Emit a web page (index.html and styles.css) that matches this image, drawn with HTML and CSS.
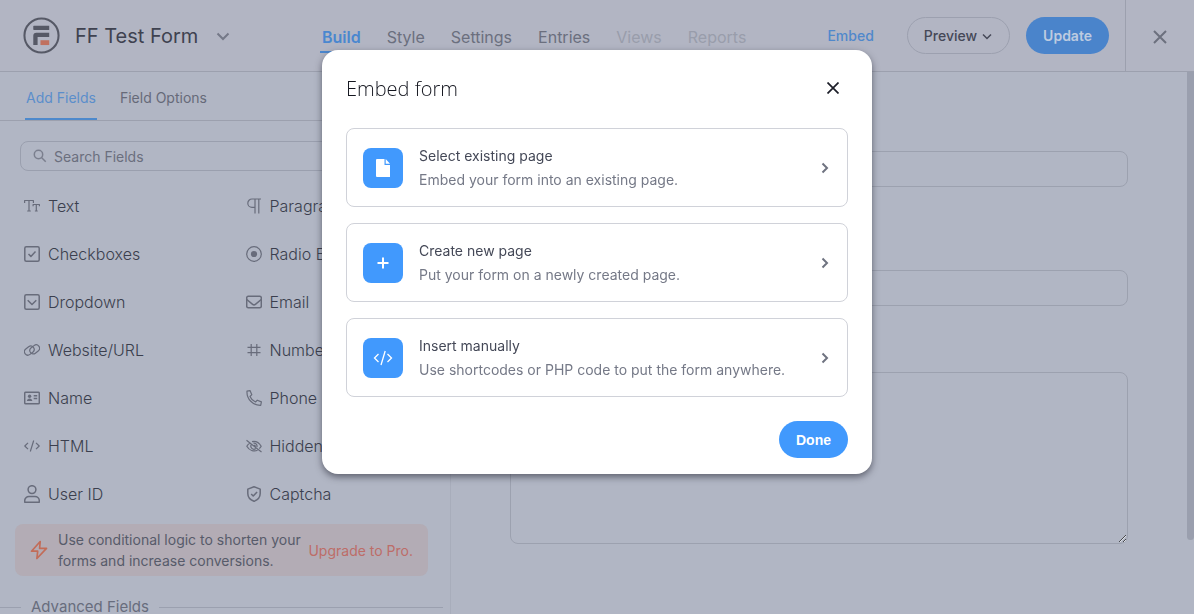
FILE: index.html
```html
<!DOCTYPE html>
<html lang="en">
<head>
<meta charset="utf-8">
<meta name="viewport" content="width=device-width, initial-scale=1">
<title>FF Test Form</title>
<link rel="stylesheet" href="styles.css">
</head>
<body>
<div class="app">
  <header class="topbar">
    <div class="brand">
      <svg class="logo" viewBox="0 0 36 36" aria-hidden="true"><circle cx="18" cy="18" r="16.6" fill="none" stroke="#565966" stroke-width="2"/><path d="M10.600 8.500H25.500V12.600H10.600a.6.6 0 0 1-.6-.6V9.100a.6.6 0 0 1 .6-.6zM13 15.300H25.500V19.400H14.200V27.300H10V18.300a3 3 0 0 1 3-3z" fill="#565966"/><path d="M17 22.600H25.500V27.300H17z" fill="#c0705f"/></svg>
      <h1 class="form-name">FF Test Form</h1>
      <button class="plain" type="button" aria-label="Switch form"><svg class="chev" viewBox="0 0 14 14"><path d="M1.500 4.500L7 10l5.500-5.500"/></svg></button>
    </div>
    <nav class="nav">
      <a class="nav-link active" href="#">Build</a>
      <a class="nav-link" href="#">Style</a>
      <a class="nav-link" href="#">Settings</a>
      <a class="nav-link" href="#">Entries</a>
      <a class="nav-link muted" href="#">Views</a>
      <a class="nav-link muted" href="#">Reports</a>
    </nav>
    <div class="actions">
      <a class="embed-link" href="#">Embed</a>
      <button class="preview" type="button">Preview <svg class="mini" viewBox="0 0 10 10"><path d="M1 3.500l4 4 4-4"/></svg></button>
      <button class="update" type="button">Update</button>
    </div>
    <button class="exit" type="button" aria-label="Close builder"><svg class="exit-icon" viewBox="0 0 14 14"><path d="M1 1l12 12M13 1L1 13"/></svg></button>
  </header>

  <div class="workspace">
    <aside class="sidebar">
      <nav class="tabs">
        <a class="tab active" href="#">Add Fields</a>
        <a class="tab" href="#">Field Options</a>
      </nav>
      <div class="search">
        <svg class="search-icon" viewBox="0 0 14 14"><circle cx="5.500" cy="5.500" r="4.200"/><path d="M8.700 8.700l4 4"/></svg>
        <input class="search-input" type="search" placeholder="Search Fields" aria-label="Search Fields">
      </div>
      <div class="fields">
        <button class="field" type="button"><svg class="icon" viewBox="0 0 16 16"><path d="M.6 5V2.500H9.400V5M5 2.500V13M3.200 13h3.600M9.100 8.200V6.500h6.300v1.700M12.300 6.500V13M10.900 13h2.800"/></svg>Text</button>
        <button class="field" type="button"><svg class="icon" viewBox="0 0 16 16"><path d="M15 1H6a4.200 4.200 0 0 0 0 8.400h3M9 1v14.500M12.800 1v14.500"/></svg>Paragraph</button>
        <button class="field" type="button"><svg class="icon bold" viewBox="0 0 16 16"><rect x=".8" y=".8" width="14.400" height="14.400" rx="1.500"/><path d="M4.500 8l2.400 2.400 4.600-4.800"/></svg>Checkboxes</button>
        <button class="field" type="button"><svg class="icon" viewBox="0 0 16 16"><circle cx="8" cy="8" r="7.300"/><circle class="solid" cx="8" cy="8" r="3.100"/></svg>Radio Buttons</button>
        <button class="field" type="button"><svg class="icon bold" viewBox="0 0 16 16"><rect x=".8" y=".8" width="14.400" height="14.400" rx="1.500"/><path d="M3.700 6.200L8 10.500l4.300-4.300"/></svg>Dropdown</button>
        <button class="field" type="button"><svg class="icon bold" viewBox="0 0 16 16"><rect x=".7" y="2.300" width="14.600" height="11.400" rx="1.500"/><path d="M.8 5.500l5.800 4.800a2.200 2.200 0 0 0 2.800 0l5.800-4.800"/></svg>Email</button>
        <button class="field" type="button"><svg class="icon" viewBox="0 0 16 16"><rect x=".1" y="5.200" width="10.400" height="6.800" rx="3.400" transform="rotate(-38 5.300 8.600)"/><rect x="5.500" y="4" width="10.400" height="6.800" rx="3.400" transform="rotate(-38 10.700 7.400)"/></svg>Website/URL</button>
        <button class="field" type="button"><svg class="icon" viewBox="0 0 16 16"><path d="M5.200 2v12M10.800 2v12M1.500 5.400h13M1.500 10.600h13"/></svg>Number</button>
        <button class="field" type="button"><svg class="icon bold" viewBox="0 0 16 16"><rect x=".7" y="2.200" width="14.600" height="11.600" rx="1"/><circle class="solid" cx="5.600" cy="6.200" r="1.700"/><path class="solid" d="M2.900 11c0-3.400 5.400-3.400 5.400 0z"/><path d="M9.700 5.800h3.500M9.700 8.400h3.500"/></svg>Name</button>
        <button class="field" type="button"><svg class="icon" viewBox="0 0 16 16"><path d="M1 1.200L4 .6 5.800 4.700 4 6.500c1 2.400 3 4.500 5.500 5.500l1.800-1.800 4.100 1.700-.7 3.400C7 15.500.5 9 1 1.200z"/></svg>Phone</button>
        <button class="field" type="button"><svg class="icon" viewBox="0 0 16 16"><path d="M4 4.800L.8 8 4 11.200M12 4.800L15.200 8 12 11.200M9.700 2.500L6.300 13.500"/></svg>HTML</button>
        <button class="field" type="button"><svg class="icon" viewBox="0 0 16 16"><path d="M.5 2.300l15 11.700M4 5C2.700 5.800 1.600 6.900.8 8.200c2.500 4.300 7 5.800 10.800 4M6 3.600c3.500-.8 7 .9 9.200 4.600-.5.900-1.200 1.700-1.900 2.400M5.400 6.500a3 3 0 0 0 4.400 4M7.400 5.200a3 3 0 0 1 3.500 3.800M8 7l2 1.500"/></svg>Hidden</button>
        <button class="field" type="button"><svg class="icon user" viewBox="0 0 16 18"><circle cx="8" cy="4.600" r="3.900"/><path d="M.7 17.200v-1.500a4.300 4.300 0 0 1 4.300-4.300h6a4.300 4.300 0 0 1 4.300 4.300v1.500z"/></svg>User ID</button>
        <button class="field" type="button"><svg class="icon bold" viewBox="0 0 16 16"><path d="M8 .8l6.200 2.300v4.300c0 3.700-2.800 6.500-6.200 7.900-3.400-1.400-6.200-4.200-6.200-7.900V3.100z"/><path d="M5.200 8l2 2 3.900-4"/></svg>Captcha</button>
      </div>
      <div class="promo">
        <svg class="bolt" viewBox="0 0 18 20"><path d="M10.200 1.500L1.500 11.200h6.200L6.900 18.500l9.600-10.200h-6.900z"/></svg>
        <p class="promo-text">Use conditional logic to shorten your forms and increase conversions.</p>
        <a class="promo-link" href="#">Upgrade to Pro.</a>
      </div>
      <h2 class="divider">Advanced Fields</h2>
    </aside>
    <main class="canvas">
      <input class="box" type="text" aria-label="Name">
      <input class="box" type="text" aria-label="Email">
      <textarea class="box area" aria-label="Message"></textarea>
    </main>
    <div class="scroll-thumb"></div>
  </div>
</div>

<div class="overlay">
  <section class="modal" role="dialog" aria-modal="true" aria-labelledby="modal-title">
    <div class="modal-head">
      <h2 class="modal-title" id="modal-title">Embed form</h2>
      <button class="plain modal-close" type="button" aria-label="Close"><svg class="close-icon" viewBox="0 0 12 12"><path d="M.5.500l11 11M11.500.500l-11 11"/></svg></button>
    </div>
    <div class="options">
      <button class="option" type="button">
        <span class="tile"><svg class="tile-icon" viewBox="0 0 20 20"><path fill="#fff" d="M4 1h7.500v6H17v12H4a1 1 0 0 1-1-1V2a1 1 0 0 1 1-1zM12.700 1L17 5.800h-4.300z"/></svg></span>
        <span class="copy"><span class="option-name">Select existing page</span><span class="option-note">Embed your form into an existing page.</span></span>
        <svg class="arrow" viewBox="0 0 8 12"><path d="M1.500 1.500L6 6l-4.500 4.500"/></svg>
      </button>
      <button class="option" type="button">
        <span class="tile"><svg class="tile-icon" viewBox="0 0 20 20"><path stroke="#fff" stroke-width="2" d="M10 4.500v11M4.500 10h11"/></svg></span>
        <span class="copy"><span class="option-name">Create new page</span><span class="option-note">Put your form on a newly created page.</span></span>
        <svg class="arrow" viewBox="0 0 8 12"><path d="M1.500 1.500L6 6l-4.500 4.500"/></svg>
      </button>
      <button class="option" type="button">
        <span class="tile"><svg class="tile-icon" viewBox="0 0 20 20"><path fill="none" stroke="#fff" stroke-width="1.300" d="M5.500 6L1.500 10l4 4M14.500 6l4 4-4 4M12.200 3L8 17"/></svg></span>
        <span class="copy"><span class="option-name">Insert manually</span><span class="option-note">Use shortcodes or PHP code to put the form anywhere.</span></span>
        <svg class="arrow" viewBox="0 0 8 12"><path d="M1.500 1.500L6 6l-4.500 4.500"/></svg>
      </button>
    </div>
    <div class="modal-foot"><button class="done" type="button">Done</button></div>
  </section>
</div>
</body>
</html>
```
FILE: styles.css
```css
* { box-sizing: border-box; }

body {
  margin: 0;
  height: 100vh;
  overflow: hidden;
  background: #b1b6c4;
  color: #464a59;
  font-family: Inter, "Liberation Sans", sans-serif;
  font-size: 14px;
}

button, input, textarea { font: inherit; color: inherit; }
button { cursor: pointer; }
a { color: inherit; text-decoration: none; }
h1, h2, p { margin: 0; font-weight: 400; }
svg { display: block; flex: none; }

.app { height: 100%; display: flex; flex-direction: column; }
.plain { border: 0; background: none; padding: 0; }

.topbar {
  flex: none;
  height: 72px;
  display: grid;
  grid-template-columns: 320px 1fr auto 69px;
  background: #b2b5c3;
  border-bottom: 1px solid #9ca0ae;
}
.brand { display: flex; align-items: center; padding-left: 23px; }
.logo { width: 37px; height: 37px; margin-right: 15px; }
.form-name { font-size: 20px; color: #3f4250; margin-right: 18px; }
.chev { width: 14px; height: 14px; fill: none; stroke: #757988; stroke-width: 2; }

.nav { display: flex; align-items: center; gap: 22px; font-size: 16px; color: #6b6f7e; }
.nav-link { padding: 8px 2px 4px; border-bottom: 2px solid transparent; }
.nav-link.active { color: #4a87cf; font-weight: 600; border-color: #4a87cf; }
.nav-link.muted { color: #999dab; }

.actions { display: flex; align-items: center; padding-right: 16px; }
.embed-link { color: #5088cb; font-weight: 500; margin-right: 33px; }
.preview {
  display: flex;
  align-items: center;
  gap: 5px;
  height: 37px;
  padding: 0 17px 0 16px;
  margin-right: 16px;
  border: 1px solid #9ca0af;
  border-radius: 19px;
  background: none;
  color: #454857;
  font-weight: 500;
}
.mini { width: 10px; height: 10px; fill: none; stroke: #454857; stroke-width: 1.5; }
.update {
  height: 37px;
  padding: 0 17px;
  border: 0;
  border-radius: 19px;
  background: #4a84cb;
  color: #bdcbe0;
  font-weight: 600;
}
.exit {
  display: grid;
  place-items: center;
  padding: 2px 0 0;
  border: 0;
  border-left: 1px solid #9ca0ae;
  background: none;
}
.exit-icon { width: 14px; height: 14px; fill: none; stroke: #6c707e; stroke-width: 2; }

.workspace { flex: 1; min-height: 0; display: flex; }
.sidebar { width: 451px; flex: none; overflow: hidden; border-right: 1px solid #a8adbb; }
.tabs {
  display: flex;
  gap: 22px;
  height: 49px;
  padding-left: 25px;
  border-bottom: 1px solid #9ca0ae;
  color: #666a79;
}
.tab { padding: 0 1px; line-height: 52px; height: 48px; }
.tab.active { color: #5b8ecb; border-bottom: 2px solid #4d89cc; }

.search {
  display: flex;
  align-items: center;
  gap: 7px;
  height: 30px;
  margin: 20px 22px 11px 20px;
  padding: 0 12px;
  border: 1px solid #9a9fae;
  border-radius: 8px;
}
.search-icon { width: 14px; height: 14px; fill: none; stroke: #7b7f8e; stroke-width: 1.5; }
.search-input { flex: 1; min-width: 0; padding: 1px 0 0; border: 0; outline: 0; background: none; }
.search-input::placeholder { color: #6b6f7e; opacity: 1; }

.fields { display: grid; grid-template-columns: 1fr 1fr; padding: 0 7px 0 24px; column-gap: 24px; }
.field {
  display: flex;
  align-items: center;
  gap: 8px;
  height: 48px;
  padding: 0;
  border: 0;
  background: none;
  font-size: 16px;
  font-weight: 300;
  color: #3b3f4e;
}
.icon { width: 16px; height: 16px; fill: none; stroke: #686c7b; stroke-width: 1.2; stroke-linejoin: round; }
.icon.bold { stroke-width: 1.5; }
.icon.user { height: 18px; stroke-width: 1.5; }
.icon .solid { fill: #686c7b; stroke: none; }

.promo {
  display: flex;
  align-items: center;
  margin: 6px 22px 0 15px;
  padding: 5px 15px;
  border-radius: 8px;
  background: #b3acb5;
  line-height: 21px;
}
.bolt { width: 18px; height: 20px; margin-right: 10px; fill: none; stroke: #c26c58; stroke-width: 1.7; stroke-linejoin: round; }
.promo-text { flex: 1; color: #575b6a; }
.promo-link { color: #bd6d68; white-space: nowrap; }

.divider {
  display: flex;
  align-items: center;
  gap: 10px;
  margin: 22px 7px 0 0;
  font-size: 15px;
  line-height: 18px;
  color: #686d7d;
}
.divider::before, .divider::after { content: ""; height: 1px; background: #9ba0af; }
.divider::before { width: 21px; }
.divider::after { flex: 1; }

.canvas { flex: 1; min-width: 0; padding: 79px 59px 0; }
.box {
  display: block;
  width: 100%;
  height: 36px;
  margin-bottom: 83px;
  border: 1px solid #9ca1af;
  border-radius: 8px;
  background: none;
  outline: 0;
}
.area { height: 172px; margin: -17px 0 0; resize: vertical; }
.scroll-thumb { width: 7px; height: 468px; flex: none; border-radius: 0 0 4px 4px; background: #9a9fae; }

.overlay {
  position: fixed;
  inset: 0;
  display: flex;
  justify-content: center;
  align-items: flex-start;
  padding: 50px 16px;
}
.modal {
  width: 100%;
  max-width: 550px;
  padding: 24px 24px 16px;
  border-radius: 16px;
  background: #fff;
  box-shadow: 0 3px 7px rgba(40, 42, 55, .6);
}
.modal-head { display: flex; justify-content: space-between; align-items: center; height: 32px; margin-bottom: 22px; }
.modal-title { font-family: "Open Sans", "Noto Sans", sans-serif; font-size: 20px; font-weight: 300; line-height: 26px; padding-bottom: 2px; color: #14161f; }
.modal-close { padding: 0 9px 4px; }
.close-icon { width: 12px; height: 12px; fill: none; stroke: #1c1e28; stroke-width: 1.7; }
.options { display: flex; flex-direction: column; gap: 16px; }
.option {
  display: flex;
  align-items: center;
  gap: 16px;
  padding: 15px 18px 14px 16px;
  border: 1px solid #d0d2d9;
  border-radius: 8px;
  background: #fff;
  text-align: left;
  line-height: 24px;
}
.option-name, .option-note { display: block; }
.option-name { color: #444857; }
.option-note { color: #757987; }
.copy { flex: 1; }
.tile { display: grid; place-items: center; width: 40px; height: 40px; border-radius: 8px; background: #4199fd; }
.tile-icon { width: 20px; height: 20px; }
.arrow { width: 8px; height: 12px; fill: none; stroke: #6f7380; stroke-width: 2; }
.modal-foot { display: flex; justify-content: flex-end; margin-top: 24px; }
.done {
  height: 37px;
  padding: 0 17px;
  border: 0;
  border-radius: 19px;
  background: #4199fd;
  color: #fff;
  font-family: "Liberation Sans", sans-serif;
  font-weight: 700;
}
```
